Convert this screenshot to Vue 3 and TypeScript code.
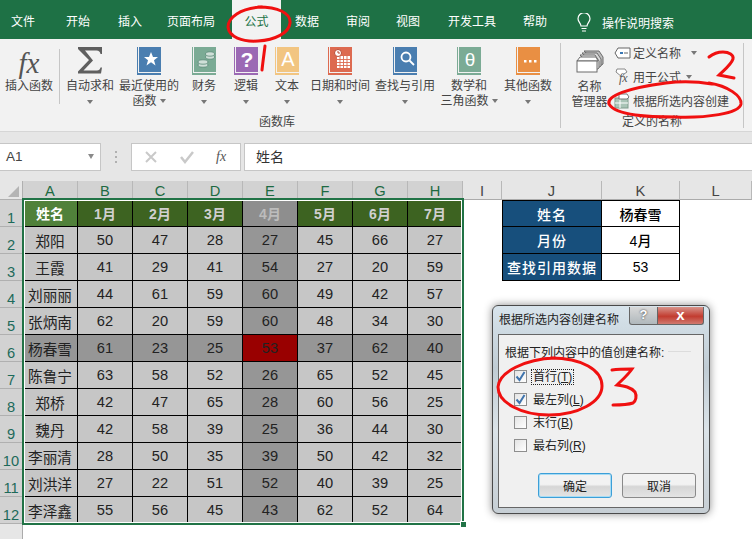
<template>
  <div class="page">
    <div class="tabs">
      <span v-for="t in tabs" :key="t.name" class="tab" :class="{ on: t.name === '公式' }" :style="{ width: t.w + 'px' }">{{ t.name }}</span>
      <svg class="bulb" width="16" height="20" viewBox="0 0 16 20" fill="none" stroke="#fff" stroke-width="1.2">
        <path d="M5 13c0-3-3-4-3-7.300a6 6 0 0 1 12 0c0 3.300-3 4.300-3 7.300z" />
        <path d="M5.500 15.500h5M6 18h4" />
      </svg>
      <span class="search">操作说明搜索</span>
    </div>

    <div class="ribbon">
      <div class="rb insert">
        <span class="fx">fx</span>
        <span class="lbl">插入函数</span>
      </div>
      <i class="vsep s1"></i>
      <div class="group lib">
        <div v-for="b in books" :key="b.label" class="rb" :style="{ width: b.w + 'px' }">
          <svg v-if="b.kind === 'sum'" class="ico" width="24" height="28" viewBox="0 0 24 28">
            <path d="M0 0h24v7h-1.500c-.5-2-1.500-3.500-4-3.500H7l8 10-9.500 10H19c2 0 3-1 3.500-3H24l-1 6H0v-2l11-11.500L0 2z" fill="#5f5f5f" />
          </svg>
          <svg v-else class="ico" width="24" height="28" viewBox="0 0 24 28">
            <rect x="0" y="0" width="1" height="28" :fill="b.color" />
            <rect x="2" y="0" width="22" height="25" :fill="b.color" />
            <rect x="1" y="26" width="23" height="2" :fill="b.color" />
            <path v-if="b.kind === 'star'" d="M14 5l2 5h5l-4 3.200 1.500 5.300-4.500-3.200-4.500 3.200 1.500-5.300-4-3.200h5z" fill="#fff" />
            <g v-if="b.kind === 'coins'" fill="#cfe0d8" stroke="#5c8a78" stroke-width=".8">
              <ellipse cx="11" cy="18" rx="5" ry="2.200" />
              <ellipse cx="11" cy="15" rx="5" ry="2.200" />
              <ellipse cx="18" cy="10" rx="4.500" ry="2.200" />
              <ellipse cx="18" cy="7" rx="4.500" ry="2.200" />
            </g>
            <text v-if="b.kind === 'q'" x="13" y="20" class="bk q">?</text>
            <text v-if="b.kind === 'a'" x="13" y="19" class="bk a">A</text>
            <g v-if="b.kind === 'date'">
              <rect x="9" y="9" width="13" height="12" fill="#fff" />
              <path d="M9 12.500h13M9 15.500h13M9 18.500h13M12 9v12M15.500 9v12M19 9v12" stroke="#dd6a50" stroke-width=".9" />
              <circle cx="10" cy="6" r="3.500" fill="#fff" stroke="#b94a33" />
              <path d="M10 4v2h2" stroke="#b94a33" fill="none" />
            </g>
            <g v-if="b.kind === 'search'" fill="none" stroke="#fff" stroke-width="1.800">
              <circle cx="13" cy="10" r="4.500" />
              <path d="M16.500 13.500l4.500 4.500" />
            </g>
            <text v-if="b.kind === 'theta'" x="13" y="19" class="bk t">θ</text>
            <g v-if="b.kind === 'more'" fill="#fff">
              <rect x="8" y="13" width="2.500" height="2.500" />
              <rect x="13" y="13" width="2.500" height="2.500" />
              <rect x="18" y="13" width="2.500" height="2.500" />
            </g>
          </svg>
          <span class="lbl">{{ b.label }}</span>
          <span v-if="b.second" class="lbl">{{ b.second }}<em class="caret in"></em></span>
          <em v-else class="caret"></em>
        </div>
        <span class="gname libname">函数库</span>
      </div>
      <i class="vsep s2"></i>
      <div class="group names">
        <div class="rb mgr">
          <svg class="ico" width="28" height="24" viewBox="0 0 28 24" fill="#f2f2f2" stroke="#6b6b6b" stroke-width="1">
            <path d="M8 1h15l4 6v7l-3 2z" fill="#bdbdbd" />
            <path d="M6 3h15l4 6v7l-3 2z" fill="#d9d9d9" />
            <path d="M4 5h15l4 6v7l-3 2z" fill="#ececec" />
            <path d="M4 7h16l2 4v0H1z" fill="#fff" />
            <rect x="1" y="11" width="20" height="11" fill="#fff" />
          </svg>
          <span class="lbl">名称</span>
          <span class="lbl">管理器</span>
        </div>
        <div class="cmds">
          <div class="cmd">
            <svg width="17" height="12" viewBox="0 0 17 12" fill="#fff" stroke="#666"><path d="M4 1h12v10H4L1 6z" /><path d="M6 5h3v2H6z" fill="#3a78b5" stroke="none" /><path d="M10 6h4" /></svg>
            <span>定义名称</span><em class="caret wide"></em>
          </div>
          <div class="cmd">
            <svg width="17" height="17" viewBox="0 0 17 17" fill="none" stroke="#888"><path d="M3 1h8l2 3-3 2-2 3-6-5z" fill="#fff" /><text x="5" y="14" class="minifx">fx</text></svg>
            <span>用于公式</span><em class="caret tight"></em>
          </div>
          <div class="cmd">
            <svg width="17" height="16" viewBox="0 0 17 16"><rect x="1" y="5" width="13" height="10" fill="#a9c4b6" stroke="#7e9c8c" /><path d="M1 10h13M6 5v10" stroke="#fff" /><path d="M5 1h8l2 3-2 2H5z" fill="#fff" stroke="#777" /></svg>
            <span>根据所选内容创建</span>
          </div>
        </div>
        <span class="gname defname">定义的名称</span>
      </div>
      <i class="vsep s3"></i>
    </div>

    <div class="fbar">
      <div class="namebox">A1<em class="nbcaret"></em></div>
      <div class="grip"><i></i><i></i><i></i></div>
      <div class="fbtns">
        <svg width="14" height="14" viewBox="0 0 14 14" stroke="#c9c9c9" stroke-width="2"><path d="M2 2l10 10M12 2L2 12" /></svg>
        <svg width="16" height="14" viewBox="0 0 16 14" fill="none" stroke="#c9c9c9" stroke-width="2.500"><path d="M2 7l4 5 8-10" /></svg>
        <span class="fxsmall">fx</span>
      </div>
      <div class="finput">姓名</div>
    </div>

    <div class="sheet">
      <div class="corner"><i></i></div>
      <div v-for="(c, i) in cols" :key="c" class="colh" :class="{ sel: i < 8 }">{{ c }}</div>
      <template v-for="(row, r) in rows" :key="r">
        <div class="rowh">{{ r + 1 }}</div>
        <div v-for="(v, c) in row" :key="c" class="cell" :class="cellClass(r, c)">{{ v }}</div>
        <div class="blank"></div>
        <div class="cell" :class="[side[r] ? 'sj' : 'blank', { top: r === 0 }]">{{ side[r]?.[0] }}</div>
        <div class="cell" :class="[side[r] ? 'sk' : 'blank', { top: r === 0 }]">{{ side[r]?.[1] }}</div>
        <div class="blank"></div>
      </template>
      <div class="rowfill"></div>
      <div class="selbox"><i></i></div>
    </div>

    <div class="dialog">
      <div class="dtitle">
        <span>根据所选内容创建名称</span>
        <div class="wbtns">
          <b class="help">?</b>
          <b class="close">x</b>
        </div>
      </div>
      <div class="dbody">
        <div class="dhead"><span>根据下列内容中的值创建名称:</span><i></i></div>
        <label v-for="o in opts" :key="o.text" class="opt">
          <span class="box">
            <svg v-if="o.on" width="11" height="11" viewBox="0 0 11 11" fill="none" stroke="#3f74ad" stroke-width="2"><path d="M1.500 5.500l3 3.500 5-8" /></svg>
          </span>
          <span class="otext" :class="{ focus: o.focus }">{{ o.text }}(<u>{{ o.key }}</u>)</span>
        </label>
        <div class="dbtns">
          <button class="ok">确定</button>
          <button>取消</button>
        </div>
      </div>
    </div>

    <svg class="marks" width="752" height="539" viewBox="0 0 752 539" fill="none" stroke="#f01010" stroke-width="3" stroke-linecap="round">
      <path d="M262 7C240 8 228 18 228 27c1 10 14 15 30 14 17-1 31-8 32-18C291 13 278 7 258 7" />
      <path d="M265 46c-1 8-2 15-3 24" />
      <path d="M709 57c5-4 10-5 14-5 6 0 11 3 10 7-2 6-9 11-14 16 5 1 10 2 15 3" />
      <path d="M709 83C728 86 742 96 741 104 739 114 705 118 676 117 650 117 616 116 609 104 606 96 628 88 666 83 682 81 700 82 712 84" />
      <path d="M555 358C525 359 499 372 498 387 498 403 522 415 549 415 578 415 602 402 602 386 602 370 582 358 551 358" />
      <path d="M612 370c7-1 14-1 20-1-4 6-10 11-15 16 7 1 14 2 18 7 2 4 1 9-2 11-6 2-13 2-20 2" />
    </svg>
  </div>
</template>

<script setup lang="ts">
type Book = { label: string; second?: string; kind: string; color: string; w: number }

const tabs = [
  { name: '文件', w: 46 },
  { name: '开始', w: 64 },
  { name: '插入', w: 40 },
  { name: '页面布局', w: 82 },
  { name: '公式', w: 49 },
  { name: '数据', w: 52 },
  { name: '审阅', w: 50 },
  { name: '视图', w: 50 },
  { name: '开发工具', w: 78 },
  { name: '帮助', w: 48 },
]

const books: Book[] = [
  { label: '自动求和', kind: 'sum', color: '', w: 56 },
  { label: '最近使用的', second: '函数', kind: 'star', color: '#4a7eb0', w: 62 },
  { label: '财务', kind: 'coins', color: '#7bab95', w: 48 },
  { label: '逻辑', kind: 'q', color: '#9b69b4', w: 36 },
  { label: '文本', kind: 'a', color: '#f2c581', w: 46 },
  { label: '日期和时间', kind: 'date', color: '#dd6a50', w: 60 },
  { label: '查找与引用', kind: 'search', color: '#4a7eb0', w: 70 },
  { label: '数学和', second: '三角函数', kind: 'theta', color: '#7bab95', w: 58 },
  { label: '其他函数', kind: 'more', color: '#e98f43', w: 60 },
]

const cols = ['A', 'B', 'C', 'D', 'E', 'F', 'G', 'H', 'I', 'J', 'K', 'L']

const rows: string[][] = [
  ['姓名', '1月', '2月', '3月', '4月', '5月', '6月', '7月'],
  ['郑阳', '50', '47', '28', '27', '45', '66', '27'],
  ['王霞', '41', '29', '41', '54', '27', '20', '59'],
  ['刘丽丽', '44', '61', '59', '60', '49', '42', '57'],
  ['张炳南', '62', '20', '59', '60', '48', '34', '30'],
  ['杨春雪', '61', '23', '25', '53', '37', '62', '40'],
  ['陈鲁宁', '63', '58', '52', '26', '65', '52', '45'],
  ['郑桥', '42', '47', '65', '28', '60', '56', '25'],
  ['魏丹', '42', '58', '39', '25', '36', '44', '30'],
  ['李丽清', '28', '50', '35', '39', '50', '42', '32'],
  ['刘洪洋', '27', '22', '51', '52', '40', '39', '25'],
  ['李泽鑫', '55', '56', '45', '43', '62', '52', '64'],
]

const side: string[][] = [
  ['姓名', '杨春雪'],
  ['月份', '4月'],
  ['查找引用数据', '53'],
]

const opts = [
  { text: '首行', key: 'T', on: true, focus: true },
  { text: '最左列', key: 'L', on: true, focus: false },
  { text: '末行', key: 'B', on: false, focus: false },
  { text: '最右列', key: 'R', on: false, focus: false },
]

const cellClass = (r: number, c: number) => {
  if (r === 0) return c === 0 ? 'a1' : c === 4 ? 'hd dim' : 'hd'
  if (r === 5 && c === 4) return 'hit'
  if (r === 5 || c === 4) return 'band'
  return 'norm'
}
</script>

<style scoped>
.page {
  position: relative;
  width: 752px;
  height: 539px;
  overflow: hidden;
  background: #fff;
  font-family: "Liberation Sans", "Noto Sans CJK SC", sans-serif;
  color: #444;
}

.tabs {
  display: flex;
  align-items: center;
  height: 39px;
  background: #1e7145;
  color: #fff;
  font-size: 12px;
}
.tab {
  flex: none;
  height: 39px;
  line-height: 44px;
  text-align: center;
}
.tab.on {
  background: #f2f2f2;
  color: #217346;
}
.bulb {
  margin: 7px 0 0 17px;
}
.search {
  margin: 5px 0 0 10px;
}

.ribbon {
  position: relative;
  display: flex;
  height: 92px;
  background: #f2f2f2;
  border-bottom: 1px solid #d6d6d6;
  font-size: 12px;
}
.rb {
  display: flex;
  flex-direction: column;
  align-items: center;
  flex: none;
  padding-top: 8px;
}
.lbl {
  line-height: 15px;
  white-space: nowrap;
}
.ico {
  flex: none;
  margin-bottom: 4px;
}
.insert {
  width: 58px;
}
.fx {
  font: italic 29px/32px "Liberation Serif", serif;
  color: #555;
}
.vsep {
  flex: none;
  width: 1px;
  background: #c6c6c6;
}
.s1 {
  height: 55px;
  margin: 10px 0 0 1px;
}
.s2 {
  height: 85px;
  margin-top: 4px;
}
.s3 {
  height: 85px;
  margin: 4px 0 0 27px;
}
.group {
  position: relative;
  display: flex;
  flex: none;
}
.lib {
  width: 500px;
  padding-left: 2px;
  box-sizing: border-box;
}
.names {
  width: 155px;
}
.gname {
  position: absolute;
  bottom: 2px;
  font-size: 12px;
}
.libname {
  left: 199px;
}
.defname {
  left: 61px;
}
.caret {
  display: block;
  width: 0;
  height: 0;
  margin-top: 6px;
  border: 3.500px solid transparent;
  border-top: 4px solid #777;
  border-bottom: 0;
}
.caret.in {
  display: inline-block;
  margin: 0 0 2px 3px;
}
.mgr {
  width: 49px;
  padding: 11px 0 0 4px;
}
.mgr .ico {
  margin-bottom: 6px;
}
.cmds {
  display: flex;
  flex-direction: column;
  padding-top: 6px;
  gap: 9px;
}
.cmd {
  display: flex;
  align-items: center;
  gap: 2px;
  height: 15px;
  white-space: nowrap;
}
.cmd .caret {
  margin: 0 0 0 3px;
}
.cmd .caret.wide {
  margin-left: 8px;
}
.minifx {
  font: italic 12px "Liberation Serif", serif;
  fill: #555;
  stroke: none;
}
.bk {
  fill: #fff;
  text-anchor: middle;
  font-family: "Liberation Sans", sans-serif;
  font-weight: 700;
}
.bk.q {
  font-size: 21px;
}
.bk.a {
  font-size: 20px;
  font-weight: 400;
}
.bk.t {
  font-size: 19px;
  font-weight: 400;
}

.fbar {
  display: flex;
  align-items: center;
  height: 49px;
  background: #e6e6e6;
}
.namebox {
  position: relative;
  box-sizing: border-box;
  width: 101px;
  height: 28px;
  background: #fff;
  border: 1px solid #c6c6c6;
  border-left: 0;
  padding-left: 6px;
  font-size: 13.500px;
  line-height: 26px;
  color: #444;
}
.nbcaret {
  position: absolute;
  right: 6px;
  top: 10px;
  width: 0;
  height: 0;
  border-style: solid;
  border-width: 5px 3.500px 0;
  border-color: #8a8a8a transparent transparent;
}
.grip {
  display: flex;
  flex-direction: column;
  gap: 3px;
  margin: 0 14px;
  width: 2px;
}
.grip i {
  width: 2px;
  height: 2px;
  background: #b0b0b0;
}
.fbtns {
  box-sizing: border-box;
  display: flex;
  align-items: center;
  gap: 21px;
  width: 110px;
  height: 28px;
  padding-left: 12px;
  background: #fff;
  border: 1px solid #c6c6c6;
}
.fxsmall {
  font: italic 14px "Liberation Serif", serif;
  color: #555;
}
.finput {
  box-sizing: border-box;
  flex: 1;
  height: 28px;
  margin-left: 3px;
  padding-left: 11px;
  background: #fff;
  border: 1px solid #c6c6c6;
  border-right: 0;
  font-size: 14px;
  line-height: 26px;
  color: #333;
}

.sheet {
  position: relative;
  display: grid;
  grid-template-columns: 23px repeat(8, 55px) 39px 100px 78px 72px;
  grid-template-rows: 19px repeat(12, 27px) 15px;
  font-size: 14.670px;
}
.corner {
  position: relative;
  background: #e6e6e6;
  border-right: 1px solid #b0b0b0;
  border-bottom: 1px solid #b0b0b0;
}
.corner i {
  position: absolute;
  right: 3px;
  bottom: 2px;
  border-style: solid;
  border-width: 0 0 11px 11px;
  border-color: transparent transparent #b4b4b4 transparent;
}
.colh {
  background: #e6e6e6;
  border-right: 1px solid #b8b8b8;
  border-bottom: 1px solid #ababab;
  text-align: center;
  line-height: 21px;
  color: #444;
  overflow: hidden;
}
.colh.sel {
  background: #d2d2d2;
  color: #1d6a42;
}
.rowh {
  background: #d2d2d2;
  border-right: 1px solid #ababab;
  border-bottom: 1px solid #b0b0b0;
  color: #1d6a5a;
  text-align: center;
  line-height: 37px;
  overflow: hidden;
}
.rowfill {
  background: #e6e6e6;
  border-right: 1px solid #ababab;
}
.cell {
  display: flex;
  align-items: center;
  justify-content: center;
  box-sizing: border-box;
  color: #222;
  white-space: nowrap;
}
.norm,
.band,
.hit,
.hd,
.a1,
.sj,
.sk {
  border-right: 1px solid #000;
  border-bottom: 1px solid #000;
}
.top {
  border-top: 1px solid #000;
}
.norm {
  background: #c6c6c6;
}
.band {
  background: #969696;
}
.hit {
  background: #990000;
}
.hd {
  background: #3d6321;
  color: #d0d0d0;
  font-weight: 700;
  font-size: 14px;
}
.hd.dim {
  background: #8e8e8e;
  color: #bcbcbc;
}
.a1 {
  background: #50813a;
  color: #fff;
  font-weight: 700;
  font-size: 14px;
}
.sj {
  background: #174f7c;
  color: #fff;
  font-weight: 500;
  font-size: 14px;
  letter-spacing: 1px;
  border-left: 1px solid #000;
}
.sk {
  background: #fff;
  color: #000;
  font-weight: 500;
  font-size: 14px;
}
.selbox {
  position: absolute;
  left: 22px;
  top: 17px;
  width: 438px;
  height: 323px;
  border: 2px solid #217346;
  outline: 1px solid #fff;
  outline-offset: -3px;
}
.selbox i {
  position: absolute;
  right: -5px;
  bottom: -5px;
  width: 5px;
  height: 5px;
  background: #217346;
  border: 1px solid #fff;
}

.dialog {
  position: absolute;
  left: 492px;
  top: 305px;
  box-sizing: border-box;
  width: 218px;
  height: 209px;
  padding: 0 5px 5px;
  background: linear-gradient(#d8e4ec, #c0ccd4 30%, #dbe3e8 60%, #c6ced4);
  border: 1px solid #4a4a4a;
  border-radius: 6px;
  box-shadow: 0 0 8px rgba(0, 0, 0, 0.45);
  font-size: 12px;
  color: #222;
}
.dtitle {
  display: flex;
  justify-content: space-between;
  height: 28px;
  padding-left: 1px;
  font-size: 12px;
  line-height: 29px;
}
.wbtns {
  display: flex;
  height: 18px;
  margin-top: 1px;
}
.wbtns b {
  display: block;
  box-sizing: border-box;
  height: 18px;
  border: 1px solid #666;
  border-top: 0;
  text-align: center;
  line-height: 15px;
}
.help {
  width: 29px;
  font-size: 13px;
  background: linear-gradient(#d8d8d8, #b0b8bc);
  color: #fff;
  text-shadow: 0 0 2px #222;
  border-radius: 0 0 0 3px;
}
.close {
  width: 46px;
  font-size: 15px;
  background: linear-gradient(#d8938a, #c23c30 55%, #d07a70);
  color: #fff;
  border-left: 0 !important;
  border-radius: 0 0 3px 0;
}
.dbody {
  position: relative;
  box-sizing: border-box;
  height: 174px;
  padding: 7px 12px 0 6px;
  background: #f0f0f0;
  border: 1px solid #666;
}
.dhead {
  display: flex;
  align-items: center;
  gap: 4px;
  height: 18px;
  margin-bottom: 5px;
}
.dhead i {
  flex: 1;
  height: 1px;
  background: #dcdcdc;
}
.opt {
  display: flex;
  align-items: center;
  gap: 4px;
  height: 23px;
  padding-left: 9px;
}
.box {
  box-sizing: border-box;
  display: flex;
  align-items: center;
  justify-content: center;
  width: 13px;
  height: 13px;
  background: linear-gradient(135deg, #e4e4e4, #fff);
  border: 1px solid #8e8e8e;
}
.otext {
  padding: 0 1px;
  border: 1px dotted transparent;
  line-height: 14px;
}
.otext.focus {
  border-color: #222;
}
.dbtns {
  position: absolute;
  left: 39px;
  bottom: 9px;
  display: flex;
  gap: 10px;
}
button {
  width: 74px;
  height: 25px;
  padding: 0;
  font: inherit;
  color: #222;
  background: linear-gradient(#f2f2f2 45%, #d6d6d6 55%, #e4e4e4);
  border: 1px solid #8a8a8a;
  border-radius: 3px;
}
.ok {
  border-color: #3c9fd8;
  box-shadow: inset 0 0 0 1px #a8dcf4;
}
.marks {
  position: absolute;
  left: 0;
  top: 0;
  pointer-events: none;
}
</style>
